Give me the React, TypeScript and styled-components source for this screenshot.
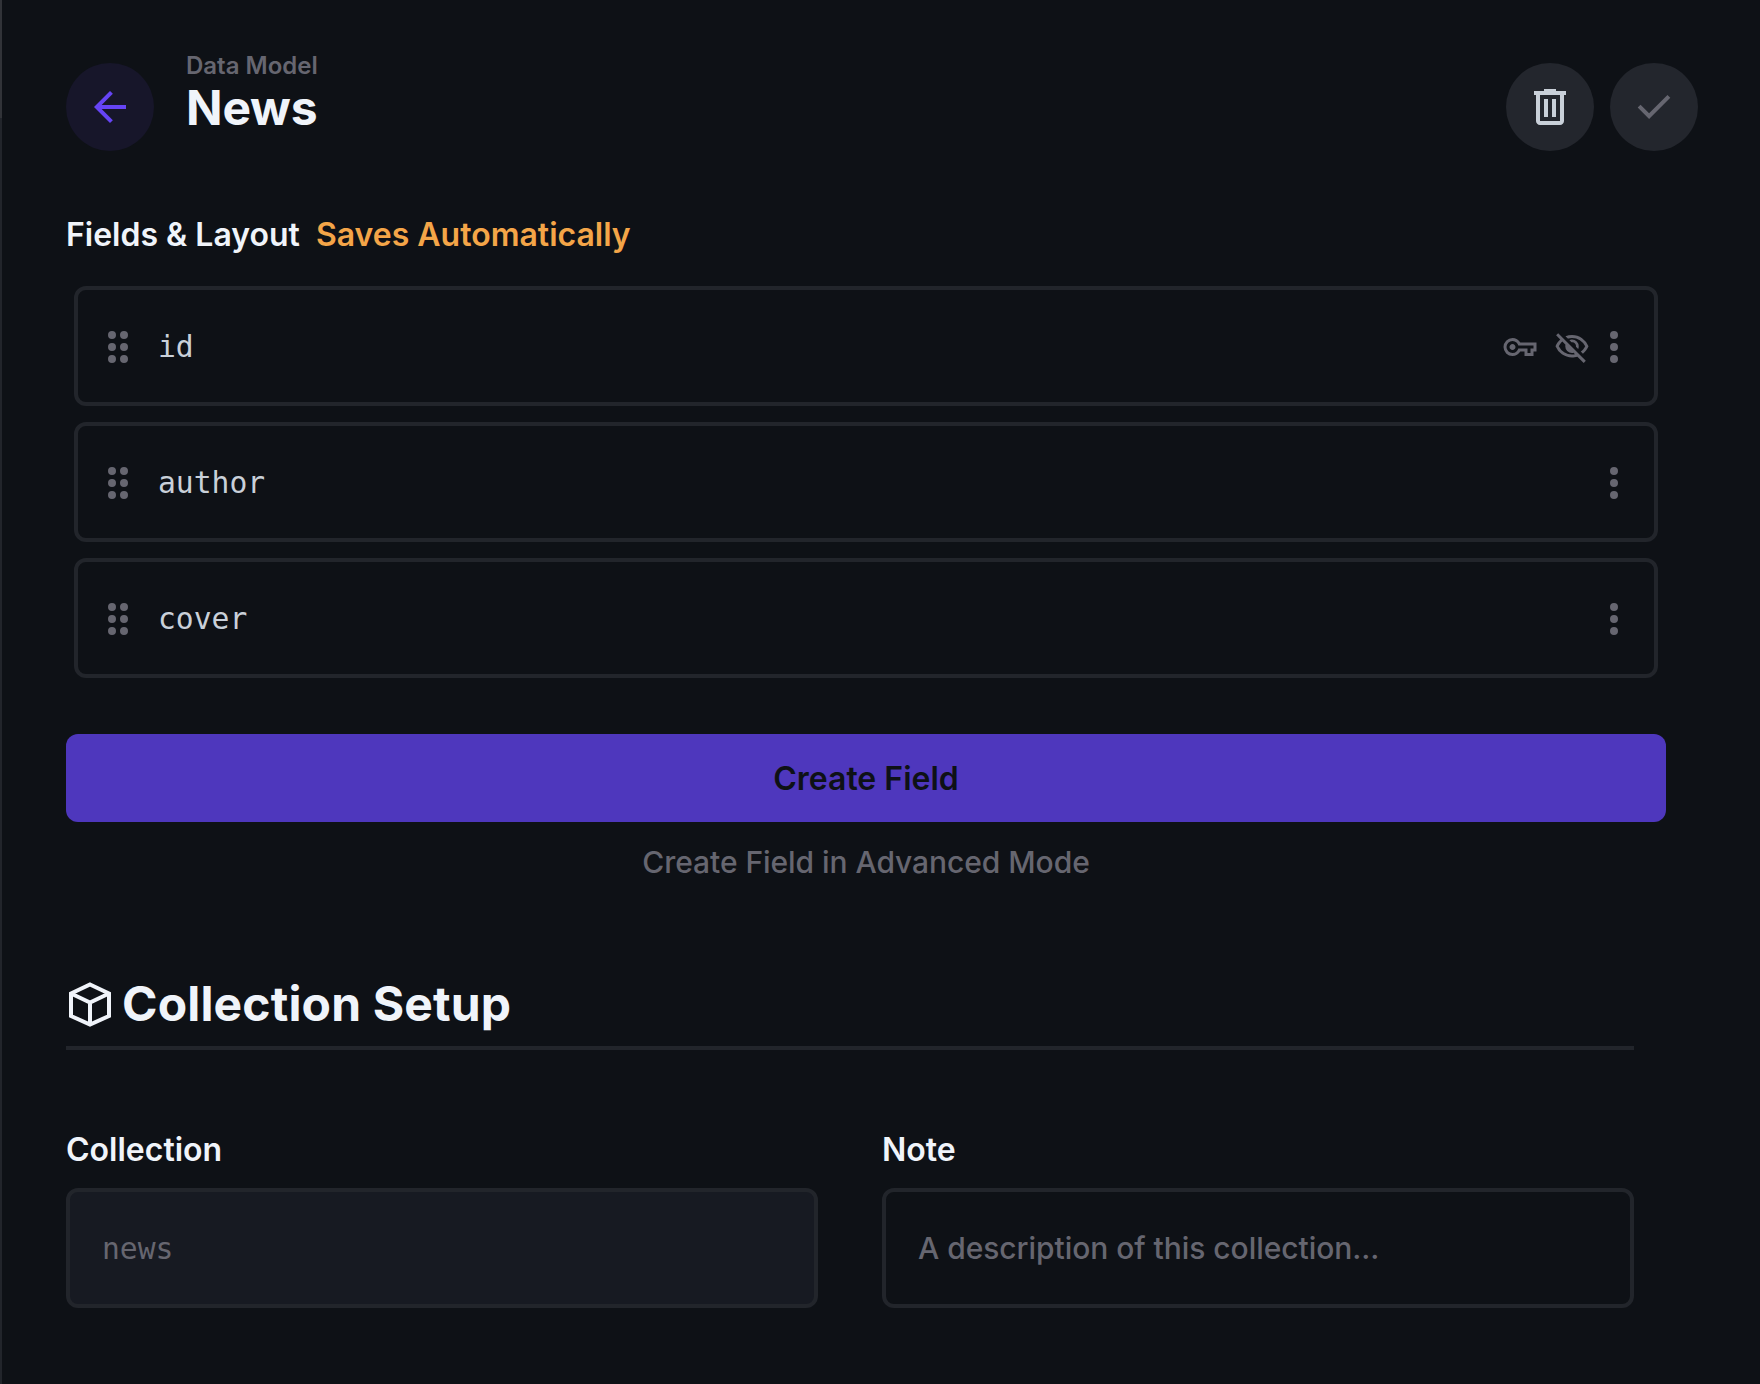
import React from "react";
import styled, { createGlobalStyle } from "styled-components";

const Global = createGlobalStyle`
  * { box-sizing: border-box; }
  body { margin: 0; background: #0e1116; }
  button { border: 0; padding: 0; font: inherit; cursor: pointer; }
`;

const sans = `Inter, "Liberation Sans", sans-serif`;
const mono = `"DejaVu Sans Mono", monospace`;

const Page = styled.div`
  width: 1760px;
  height: 1384px;
  display: flex;
  background: #0e1116;
  color: #f0f4fa;
  font-family: ${sans};
  overflow: hidden;
`;

const Edge = styled.div`
  flex: none;
  width: 2px;
  background: linear-gradient(#313338 118px, #22252b 118px);
`;

const Main = styled.main`
  flex: 1;
  padding: 0 62px 0 64px;
`;

const Header = styled.header`
  display: flex;
  align-items: center;
  height: 120px;
  margin-top: 47px;
`;

const RoundButton = styled.button<{ $bg: string; $fg: string }>`
  display: flex;
  align-items: center;
  justify-content: center;
  width: 88px;
  height: 88px;
  border-radius: 50%;
  background: ${(p) => p.$bg};
  color: ${(p) => p.$fg};
`;

const Titles = styled.div`
  flex: 1;
  margin-left: 32px;
  margin-top: -27px;
`;

const Crumb = styled.div`
  font-size: 24px;
  line-height: 30px;
  font-weight: 600;
  color: #666670;
`;

const PageTitle = styled.h1`
  margin: -1px 0 1px;
  font-size: 48px;
  line-height: 55px;
  font-weight: 700;
  letter-spacing: -0.2px;
`;

const Actions = styled.div`
  display: flex;
  gap: 16px;
`;

const Label = styled.div`
  font-size: 32px;
  line-height: 38px;
  font-weight: 600;
`;

const SectionLabel = styled(Label)`
  display: flex;
  gap: 16px;
  margin-top: 49px;
`;

const AutoSave = styled.span`
  color: #f4a548;
`;

const FieldList = styled.div`
  display: flex;
  flex-direction: column;
  gap: 16px;
  width: 1600px;
  padding: 0 8px;
  margin-top: 32px;
`;

const FieldRow = styled.div`
  display: flex;
  align-items: center;
  height: 120px;
  padding: 2px 16px 0;
  border: 4px solid #22252b;
  border-radius: 12px;
  color: #666670;
`;

const FieldName = styled.span`
  flex: 1;
  margin-left: 16px;
  font-family: ${mono};
  font-size: 29.7px;
  line-height: 40px;
  color: #c9d0d9;
`;

const Badges = styled.div`
  display: flex;
  gap: 16px;
`;

const CreateButton = styled.button`
  display: block;
  width: 1600px;
  height: 88px;
  margin-top: 56px;
  border-radius: 12px;
  background: #4e37bd;
  color: #0e1116;
  font-size: 32px;
  font-weight: 600;
`;

const AdvancedLink = styled.button`
  display: block;
  width: 1600px;
  margin-top: 21px;
  background: none;
  color: #666670;
  font-size: 30px;
  line-height: 38px;
  font-weight: 500;
  letter-spacing: -0.06px;
`;

const Divider = styled.div`
  display: flex;
  align-items: center;
  gap: 8px;
  width: 1568px;
  height: 97px;
  margin-top: 72px;
  padding-top: 9px;
  border-bottom: 4px solid #22252b;
`;

const SetupTitle = styled.h2`
  margin: 0;
  font-size: 48px;
  line-height: 56px;
  font-weight: 700;
  letter-spacing: 0.15px;
`;

const Form = styled.div`
  display: grid;
  grid-template-columns: 752px 752px;
  column-gap: 64px;
  margin-top: 81px;
`;

const Input = styled.div<{ $disabled?: boolean }>`
  display: flex;
  align-items: center;
  height: 120px;
  margin-top: 19px;
  padding: ${(p) => (p.$disabled ? "1px 32px 0" : "0 32px")};
  border: 4px solid #22252b;
  border-radius: 12px;
  background: ${(p) => (p.$disabled ? "#171a22" : "transparent")};
  color: #666670;
  font-family: ${(p) => (p.$disabled ? mono : sans)};
  font-size: ${(p) => (p.$disabled ? "29.7px" : "30px")};
  font-weight: ${(p) => (p.$disabled ? 400 : 500)};
  letter-spacing: ${(p) => (p.$disabled ? "0" : "-0.05px")};
`;

const Svg = styled.svg`
  display: block;
  flex: none;
`;

const paths = {
  back: "m12 20-8-8 8-8 1.425 1.4-5.6 5.6H20v2H7.825l5.6 5.6Z",
  trash:
    "M7 21q-.825 0-1.412-.587Q5 19.825 5 19V6H4V4h5V3h6v1h5v2h-1v13q0 .825-.587 1.413Q17.825 21 17 21ZM17 6H7v13h10ZM9 17h2V8H9Zm4 0h2V8h-2Z",
  check: "m9.55 18-5.7-5.7 1.425-1.425L9.55 15.15l9.175-9.175L20.15 7.4Z",
  drag: "M9 4a2 2 0 1 0 0 4 2 2 0 0 0 0-4Zm6 0a2 2 0 1 0 0 4 2 2 0 0 0 0-4ZM9 10a2 2 0 1 0 0 4 2 2 0 0 0 0-4Zm6 0a2 2 0 1 0 0 4 2 2 0 0 0 0-4ZM9 16a2 2 0 1 0 0 4 2 2 0 0 0 0-4Zm6 0a2 2 0 1 0 0 4 2 2 0 0 0 0-4Z",
  more: "M12 4a2 2 0 1 0 0 4 2 2 0 0 0 0-4Zm0 6a2 2 0 1 0 0 4 2 2 0 0 0 0-4Zm0 6a2 2 0 1 0 0 4 2 2 0 0 0 0-4Z",
  key: "M7 18q-2.5 0-4.25-1.75T1 12q0-2.5 1.75-4.25T7 6q1.675 0 3.038.825Q11.4 7.65 12.2 9H23v6h-2v3h-6v-3h-2.800q-.8 1.350-2.162 2.175Q8.675 18 7 18Zm0-2q1.650 0 2.650-1.012 1-1.013 1.200-1.988H17v3h2v-3h2v-2H10.850q-.2-.975-1.200-1.988Q8.650 8 7 8 5.350 8 4.175 9.175 3 10.350 3 12q0 1.650 1.175 2.825Q5.350 16 7 16Zm0-2q.825 0 1.412-.588Q9 12.825 9 12t-.588-1.413Q7.825 10 7 10t-1.412.587Q5 11.175 5 12q0 .825.588 1.412Q6.175 14 7 14Z",
  hidden:
    "m16.1 13.3-1.45-1.45q.225-1.175-.675-2.2-.9-1.025-2.325-.8L10.2 7.4q.425-.2.863-.3Q11.5 7 12 7q1.875 0 3.188 1.312Q16.5 9.625 16.5 11.5q0 .5-.1.938-.1.437-.3.862Zm3.2 3.15-1.450-1.400q.950-.725 1.688-1.588.737-.862 1.262-1.962-1.250-2.525-3.588-4.013Q14.875 6 12 6q-.725 0-1.425.1-.7.1-1.375.3L7.650 4.850q1.025-.425 2.100-.638Q10.825 4 12 4q3.775 0 6.725 2.087Q21.675 8.175 23 11.500q-.575 1.475-1.512 2.738Q20.550 15.500 19.300 16.450Zm.5 6.150-4.200-4.150q-.875.275-1.762.413Q12.950 19 12 19q-3.775 0-6.725-2.087Q2.325 14.825 1 11.500q.525-1.325 1.325-2.463Q3.125 7.900 4.150 7L1.400 4.200l1.400-1.400 18.400 18.400ZM5.550 8.400q-.725.650-1.325 1.425T3.200 11.500q1.250 2.525 3.587 4.012Q9.125 17 12 17q.5 0 .975-.062.475-.063.975-.138l-.9-.95q-.275.075-.525.113Q12.275 16 12 16q-1.875 0-3.188-1.312Q7.500 13.375 7.500 11.500q0-.275.037-.525.038-.25.113-.525Z",
};

const Icon = ({ name, size = 48 }: { name: keyof typeof paths; size?: number }) => (
  <Svg width={size} height={size} viewBox="0 0 24 24" fill="currentColor">
    <path d={paths[name]} />
  </Svg>
);

const BoxIcon = () => (
  <Svg width={48} height={48} viewBox="0 0 48 48" fill="none" stroke="currentColor" strokeWidth={4}>
    <path d="M24 4.500 43 13.500V36L24 44.500 5 36V13.500ZM5 13.500 24 22.500 43 13.500M24 22.500V44.500" />
  </Svg>
);

const fields = [
  { name: "id", locked: true },
  { name: "author", locked: false },
  { name: "cover", locked: false },
];

export default function App() {
  return (
    <Page>
      <Global />
      <Edge />
      <Main>
        <Header>
          <RoundButton $bg="#17162a" $fg="#6644f5" aria-label="Back">
            <Icon name="back" />
          </RoundButton>
          <Titles>
            <Crumb>Data Model</Crumb>
            <PageTitle>News</PageTitle>
          </Titles>
          <Actions>
            <RoundButton $bg="#23262d" $fg="#c9d0d9" aria-label="Delete">
              <Icon name="trash" />
            </RoundButton>
            <RoundButton $bg="#23262d" $fg="#666670" aria-label="Save">
              <Icon name="check" />
            </RoundButton>
          </Actions>
        </Header>

        <SectionLabel>
          <span>Fields &amp; Layout</span>
          <AutoSave>Saves Automatically</AutoSave>
        </SectionLabel>

        <FieldList>
          {fields.map((f) => (
            <FieldRow key={f.name}>
              <Icon name="drag" />
              <FieldName>{f.name}</FieldName>
              {f.locked && (
                <Badges>
                  <Icon name="key" size={36} />
                  <Icon name="hidden" size={36} />
                </Badges>
              )}
              <Icon name="more" />
            </FieldRow>
          ))}
        </FieldList>

        <CreateButton>Create Field</CreateButton>
        <AdvancedLink>Create Field in Advanced Mode</AdvancedLink>

        <Divider>
          <BoxIcon />
          <SetupTitle>Collection Setup</SetupTitle>
        </Divider>

        <Form>
          <div>
            <Label>Collection</Label>
            <Input $disabled>news</Input>
          </div>
          <div>
            <Label>Note</Label>
            <Input>A description of this collection...</Input>
          </div>
        </Form>
      </Main>
    </Page>
  );
}
